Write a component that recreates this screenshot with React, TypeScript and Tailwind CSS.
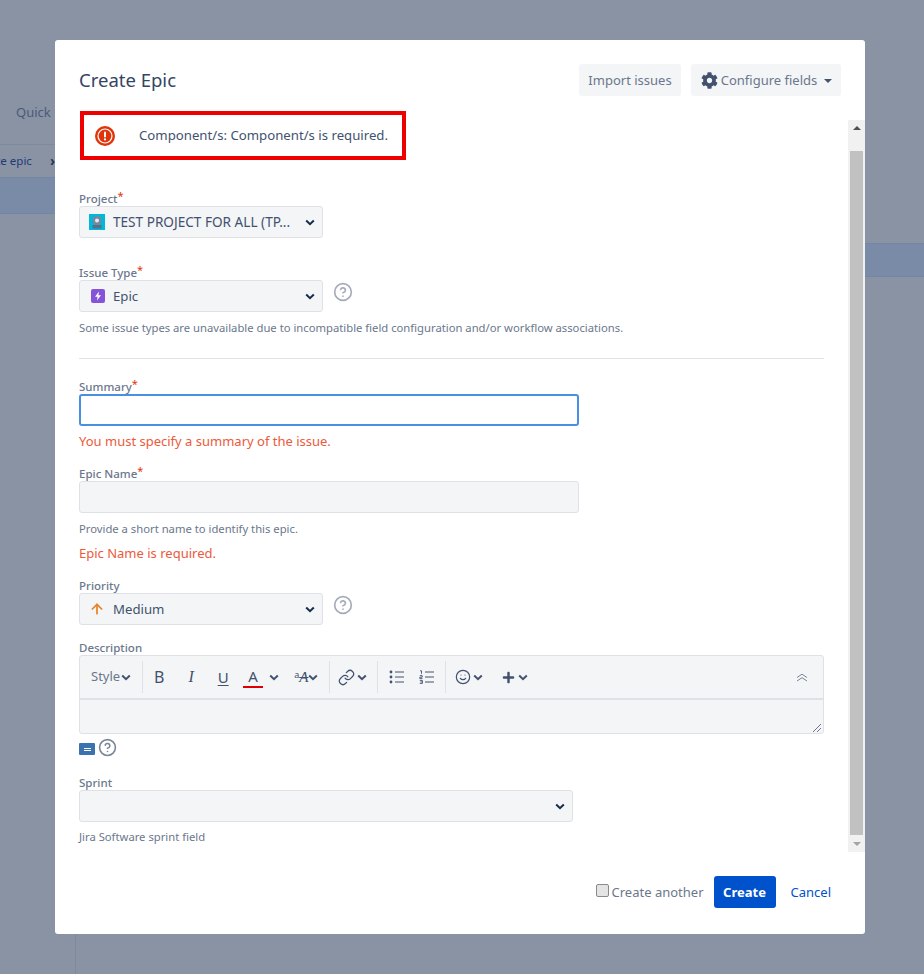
import { ArrowUp, CircleHelp, Link, Smile } from "lucide-react";
import { FaCog, FaPlus } from "react-icons/fa";

const font = "font-['Noto_Sans','Open_Sans',sans-serif]";

function Chevron({ className = "text-[#42526e]" }: { className?: string }) {
  return (
    <svg width="10" height="7" viewBox="0 0 10 7" className={className} fill="none">
      <path d="M1.2 1.5 5 5.2 8.8 1.5" stroke="currentColor" strokeWidth="2" />
    </svg>
  );
}

function Label({ text, required, className = "" }: { text: string; required?: boolean; className?: string }) {
  return (
    <div className={`h-[16px] text-[11.5px] leading-[18px] font-medium text-[#6b778c] ${className}`}>
      {text}
      {required && <span className="relative -top-[3px] text-[11px] font-normal text-[#de350b]">*</span>}
    </div>
  );
}

function SelectBox({ children, width }: { children?: React.ReactNode; width: string }) {
  return (
    <div className={`flex h-8 items-center rounded-[3px] border border-[#dfe1e6] bg-[#f4f5f7] pl-[10px] pr-[7px] text-[13.2px] text-[#42526e] ${width}`}>
      <div className="flex min-w-0 flex-1 items-center gap-2">{children}</div>
      <Chevron className="text-[#172b4d]" />
    </div>
  );
}

function Help() {
  return <CircleHelp size={20} strokeWidth={2} className="text-[#a5adba]" />;
}

function Sep({ className = "" }: { className?: string }) {
  return <div className={`h-8 w-px bg-[#dfe1e6] ${className}`} />;
}

function BulletIcon() {
  return (
    <svg width="16" height="14" viewBox="0 0 16 14" fill="none" className="ml-[11px]">
      <circle cx="2" cy="2" r="1.4" fill="currentColor" />
      <circle cx="2" cy="7" r="1.4" fill="currentColor" />
      <circle cx="2" cy="12" r="1.4" fill="currentColor" />
      <path d="M6 2h9M6 7h9M6 12h9" stroke="currentColor" strokeWidth="1" />
    </svg>
  );
}

function NumberedIcon() {
  return (
    <svg width="16" height="14" viewBox="0 0 16 14" fill="none" className="ml-[14px]">
      <path d="M1 .8h1.5v3M.8 5.6h2.4v1.6H.8v1.4h2.6M.8 10.4h2.6v3H.8M1.4 11.9h2" stroke="currentColor" strokeWidth=".9" />
      <path d="M6 2h9M6 7h9M6 12h9" stroke="currentColor" strokeWidth="1" />
    </svg>
  );
}

function Toolbar() {
  return (
    <div className="flex h-[44px] items-center border-b-2 border-[#dfe1e6] pl-[11px] pr-[15px] text-[#42526e]">
      <div className="flex items-center gap-px text-[13px] text-[#6b778c]">
        Style
        <Chevron />
      </div>
      <Sep className="ml-[11px]" />
      <span className="w-[32px] text-center text-[16px] leading-none">B</span>
      <span className="w-[32px] text-center font-['Liberation_Serif',serif] text-[16px] italic leading-none">I</span>
      <span className="w-[32px] text-center text-[15px] leading-none underline underline-offset-2">U</span>
      <span className="ml-[4px] w-[20px] border-b-2 border-[#de0000] text-center text-[15px] leading-[19px]">A</span>
      <span className="ml-[6px]">
        <Chevron />
      </span>
      <span className="ml-[15px] flex items-center">
        <span className="relative -top-[3px] text-[9px] leading-none">a</span>
        <span className="font-['Liberation_Serif',serif] text-[15px] italic leading-none line-through">A</span>
        <Chevron />
      </span>
      <Sep className="ml-[11px]" />
      <div className="ml-[8px] flex items-center gap-[2px]">
        <Link size={17} strokeWidth={1.7} />
        <Chevron />
      </div>
      <Sep className="ml-[10px]" />
      <BulletIcon />
      <NumberedIcon />
      <Sep className="ml-[10px]" />
      <div className="ml-[9px] flex items-center gap-[2px]">
        <Smile size={16} strokeWidth={1.8} />
        <Chevron />
      </div>
      <div className="ml-[19px] flex items-center gap-[3px]">
        <FaPlus size={13} />
        <Chevron />
      </div>
      <svg width="12" height="9" viewBox="0 0 12 9" fill="none" className="ml-auto text-[#7a869a]">
        <path d="M1 4.5 6 1.2l5 3.3M1 8 6 4.7 11 8" stroke="currentColor" strokeWidth="1" />
      </svg>
    </div>
  );
}

function Scrollbar() {
  return (
    <div className="mt-[9px] flex w-[17px] flex-col items-center bg-[#f1f1f1]">
      <div className="flex h-[31px] w-full items-start justify-center pt-[6px]">
        <div className="border-x-[4px] border-b-[4px] border-x-transparent border-b-[#505050]" />
      </div>
      <div className="w-[13px] flex-1 bg-[#c1c1c1]" />
      <div className="flex h-[17px] w-full items-center justify-center">
        <div className="border-x-[4px] border-t-[4px] border-x-transparent border-t-[#a3a3a3]" />
      </div>
    </div>
  );
}

export default function App() {
  return (
    <div className={`relative flex h-[974px] w-[924px] flex-col overflow-hidden bg-[#8993a4] ${font}`}>
      {/* Page behind the dimmed overlay */}
      <div className="h-[144px] pl-4 pt-[102px] text-[13px] leading-[20px] text-[#4a5a78]">Quick</div>
      <div className="flex h-[33px] w-[55px] items-center justify-end overflow-hidden whitespace-nowrap border-t border-[#7f8a9e] text-[11.5px] text-[#1f3a78]">
        Create epic
        <span className="ml-[18px] text-[14px] font-bold leading-none text-[#253858]">›</span>
      </div>
      <div className="h-[37px] w-[60px] border-y border-[#7486a5] bg-[#7a8ba8]" />
      <div className="ml-[75px] flex-1 border-l border-[#7f8a9e] pt-[29px]">
        <div className="h-[34px] border-y border-[#7486a5] bg-[#7a8ba8]" />
      </div>

      {/* Dialog */}
      <div className="absolute left-[55px] top-10 flex h-[894px] w-[810px] flex-col rounded-[3px] bg-white">
        <div className="flex h-[71px] shrink-0 items-start justify-between pl-6 pr-6 pt-6">
          <h1 className="text-[18.5px] leading-[32px] text-[#344563]">Create Epic</h1>
          <div className="flex gap-[10px] text-[13px] text-[#6b778c]">
            <div className="flex h-8 w-[102px] items-center justify-center rounded-[3px] bg-[#f4f5f7] pt-px">Import issues</div>
            <div className="flex h-8 w-[150px] items-center justify-center gap-[3px] rounded-[3px] bg-[#f4f5f7] pl-px pt-px">
              <FaCog size={17} className="text-[#42526e]" />
              Configure fields
              <span className="ml-[4px] border-x-[4px] border-t-[4px] border-x-transparent border-t-[#42526e]" />
            </div>
          </div>
        </div>

        <div className="flex h-[741px] shrink-0">
          <div className="min-w-0 flex-1 pl-6 pr-6">
            <div className="ml-px flex h-[49px] w-[326px] items-center border-4 border-[#ee0000] pl-[11px] text-[13.2px] text-[#42526e]">
              <svg width="20" height="20" viewBox="0 0 20 20" className="shrink-0">
                <circle cx="10" cy="10" r="10" fill="#de350b" />
                <circle cx="10" cy="10" r="7.6" fill="#fff" />
                <circle cx="10" cy="10" r="6.4" fill="#de350b" />
                <rect x="9" y="5.4" width="2" height="6" rx="1" fill="#fff" />
                <circle cx="10" cy="13.4" r="1.1" fill="#fff" />
              </svg>
              <span className="ml-6">Component/s: Component/s is required.</span>
            </div>

            <Label text="Project" required className="mt-[30px]" />
            <SelectBox width="w-[244px]">
              <svg width="16" height="16" viewBox="0 0 16 16" className="-ml-px shrink-0">
                <rect width="16" height="16" fill="#00b8d9" />
                <circle cx="8" cy="6.5" r="4.5" fill="#7a869a" />
                <circle cx="8" cy="6.5" r="2" fill="#deebff" />
                <rect x="3.5" y="11" width="9" height="3.5" fill="#5e6c84" />
              </svg>
              <span className="truncate pt-px text-[13.6px]">TEST PROJECT FOR ALL (TP...</span>
            </SelectBox>

            <Label text="Issue Type" required className="mt-[26px]" />
            <div className="flex items-start gap-[10px]">
              <SelectBox width="w-[244px]">
                <svg width="14" height="14" viewBox="0 0 14 14" className="ml-px shrink-0">
                  <rect width="14" height="14" rx="2" fill="#8554d8" />
                  <path d="M8 2.5 4 7.8h2.6L6 11.5l4-5.3H7.4z" fill="#fff" />
                </svg>
                <span className="pt-px">Epic</span>
              </SelectBox>
              <div className="pt-[2px]">
                <Help />
              </div>
            </div>
            <p className="mt-[8px] text-[11.25px] leading-[16px] text-[#6b778c]">
              Some issue types are unavailable due to incompatible field configuration and/or workflow associations.
            </p>

            <hr className="mt-[22px] border-[#dfe1e6]" />

            <Label text="Summary" required className="mt-[19px]" />
            <input className="block h-8 w-[500px] rounded-[3px] border-2 border-[#4a90e2] bg-white outline-none" />
            <p className="mt-[5px] text-[13px] leading-[20px] text-[#ec5a3c]">You must specify a summary of the issue.</p>

            <Label text="Epic Name" required className="mt-[14px]" />
            <div className="h-8 w-[500px] rounded-[3px] border border-[#dfe1e6] bg-[#f4f5f7]" />
            <p className="mt-[8px] text-[11.25px] leading-[16px] text-[#6b778c]">Provide a short name to identify this epic.</p>
            <p className="mt-[6px] text-[13px] leading-[20px] text-[#ec5a3c]">Epic Name is required.</p>

            <Label text="Priority" className="mt-[14px]" />
            <div className="flex items-start gap-[10px]">
              <SelectBox width="w-[244px]">
                <ArrowUp size={16} strokeWidth={2.6} className="-ml-px shrink-0 text-[#e5842a]" />
                <span className="pt-px">Medium</span>
              </SelectBox>
              <div className="pt-[2px]">
                <Help />
              </div>
            </div>

            <Label text="Description" className="mt-[14px]" />
            <div className="h-[79px] rounded-[3px] border border-[#dfe1e6] bg-[#f4f5f7]">
              <Toolbar />
              <div className="relative">
                <svg width="10" height="10" viewBox="0 0 10 10" className="absolute right-px top-[23px] text-[#6b778c]">
                  <path d="M1 9 9 1M5 9 9 5" stroke="currentColor" strokeWidth="1" />
                </svg>
              </div>
            </div>
            <div className="mt-[4px] flex h-[18px] items-center gap-[3px]">
              <div className="mt-[4px] flex h-[12px] w-4 flex-col items-center justify-center gap-px rounded-[1px] bg-[#3b73af]">
                <div className="h-px w-[7px] bg-white" />
                <div className="h-px w-[7px] bg-white" />
              </div>
              <CircleHelp size={19} strokeWidth={2} className="text-[#7a869a]" />
            </div>

            <Label text="Sprint" className="mt-[18px]" />
            <SelectBox width="w-[494px]" />
            <p className="mt-[7px] text-[11.25px] leading-[16px] text-[#6b778c]">Jira Software sprint field</p>
          </div>
          <Scrollbar />
        </div>

        <div className="mt-6 flex h-8 items-center justify-end pr-[34px] text-[13px]">
          <span className="mb-[4px] mr-[3px] h-[13px] w-[13px] rounded-[2px] border border-[#8a8a8a] bg-[#e4e4e4]" />
          <span className="pt-px text-[#6b778c]">Create another</span>
          <span className="ml-[10px] flex h-8 w-[62px] items-center justify-center rounded-[3px] bg-[#0052cc] pt-px font-bold text-white">Create</span>
          <span className="ml-[15px] pt-px text-[#0052cc]">Cancel</span>
        </div>
      </div>
    </div>
  );
}
